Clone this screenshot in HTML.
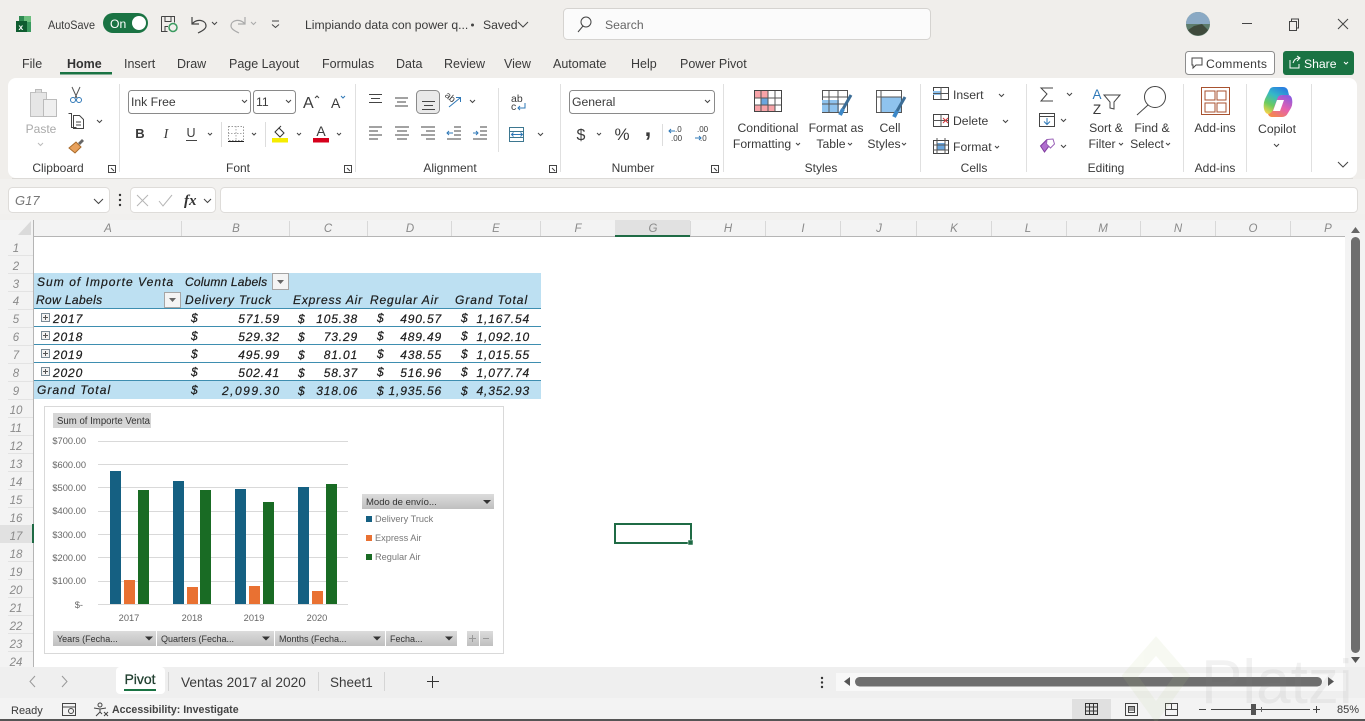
<!DOCTYPE html>
<html lang="en"><head><meta charset="utf-8"><title>Excel</title>
<style>
html,body{margin:0;padding:0;width:1365px;height:721px;overflow:hidden;background:#fff}
svg{display:block}
text{font-family:"Liberation Sans",sans-serif;font-size:12.2px;fill:#3a3a3a}
.t text{font-size:12.5px}
.m{text-anchor:middle}.e{text-anchor:end}
.h text{font-size:12px;letter-spacing:.85px;fill:#1d1d1d;stroke:#1d1d1d;stroke-width:.22;font-style:italic}
.hd text{font-size:11.5px;fill:#8a8a8a;font-style:italic;text-anchor:middle}
.c text{font-size:9.3px;fill:#666}
.f text{font-size:9px;fill:#333}
.i{fill:none;stroke:#444;stroke-width:1}
.ch{fill:none;stroke:#444;stroke-width:1}
</style></head><body>
<svg width="1365" height="721" viewBox="0 0 1365 721" xmlns="http://www.w3.org/2000/svg">
<defs>
<linearGradient id="g" x1="0" y1="0" x2="0" y2="1"><stop offset="0" stop-color="#dcdcdc"/><stop offset="1" stop-color="#bfbfbf"/></linearGradient>
<linearGradient id="cl" x1=".7" y1="0" x2=".2" y2="1"><stop offset="0" stop-color="#2a7fe0"/><stop offset=".35" stop-color="#35b8c8"/><stop offset=".7" stop-color="#6ccb5f"/><stop offset="1" stop-color="#f2d34a"/></linearGradient>
<linearGradient id="cr" x1=".8" y1="0" x2=".2" y2="1"><stop offset="0" stop-color="#8a5be0"/><stop offset=".5" stop-color="#e45fb0"/><stop offset="1" stop-color="#f58a4a"/></linearGradient>
</defs>
<rect width="1365" height="721" fill="#f0eeeb"/>
<!-- title bar -->
<rect x="24" y="16" width="7" height="6" fill="#6cbf7e"/><rect x="24" y="22" width="7" height="10" fill="#3a9a5f"/><rect x="19" y="16" width="5" height="5" fill="#2f8a52"/><rect x="16" y="21" width="11" height="11" fill="#0f5c30"/><text x="18.500" y="30" style="font-size:8.500px;font-weight:bold;fill:#fff">x</text>
<text x="48" y="29" textLength="47" lengthAdjust="spacingAndGlyphs">AutoSave</text>
<rect x="103" y="13" width="45" height="20" rx="10" fill="#1a7343"/><text x="110" y="28" style="fill:#fff;font-size:12.2px">On</text><circle cx="139" cy="23" r="7" fill="#fff"/>
<path class="i" d="M161.500 16.500h13v6M161.500 16.500v15h6M165 16.500v5h6v-5M165 31.500v-5h3"/><circle cx="173" cy="27.500" r="4" fill="none" stroke="#3a9a5f" stroke-width="1.500"/>
<path d="M192 17v7h7M192 24c5-6 14-4 14 2 0 3-4 5-8 7" fill="none" stroke="#444" stroke-width="1.200"/><path class="ch" d="M212 22l2.500 2.500 2.500-2.500"/>
<path d="M245 17v7h-7M245 24c-5-6-14-4-14 2 0 3 4 5 8 7" fill="none" stroke="#aaa" stroke-width="1.200"/><path fill="none" stroke="#aaa" d="M251 22l2.500 2.500 2.500-2.500"/>
<path class="i" d="M272 21h7M272 24.500l3.500 3 3.500-3"/>
<text x="305" y="29">Limpiando data con power q...</text><circle cx="472.500" cy="25" r="1.500" fill="#444"/><text x="483" y="29">Saved</text><path class="i" d="M518 22l5 5 5-5"/>
<rect x="563.500" y="8.500" width="367" height="31" rx="4" fill="#fbfbfb" stroke="#d5d3d0"/>
<circle cx="586" cy="22" r="5" class="i"/><path class="i" d="M583 26l-5 6"/><text x="605" y="29" style="fill:#666">Search</text>
<circle cx="1198" cy="24" r="12" fill="#5d7c6c"/><path d="M1186 24a12 12 0 0 1 24 0z" fill="#8aa9c4"/><path d="M1188 30a12 12 0 0 0 20 0l-6-6-8 2z" fill="#3f4a3c"/>
<path class="i" d="M1242 23.500h10"/><path class="i" d="M1289.500 21.500h7v9h-7zM1291.500 21v-2h7v9h-2"/><path class="i" d="M1338 19l10 10M1348 19l-10 10"/>
<!-- tabs -->
<g class="t"><text x="22" y="68">File</text><text x="67" y="68" style="font-weight:bold;fill:#333">Home</text>
<text x="124" y="68">Insert</text><text x="177" y="68">Draw</text><text x="229" y="68">Page Layout</text><text x="322" y="68">Formulas</text><text x="396" y="68">Data</text><text x="444" y="68">Review</text><text x="504" y="68">View</text><text x="553" y="68">Automate</text><text x="631" y="68">Help</text><text x="680" y="68">Power Pivot</text></g>
<rect x="60" y="72" width="52" height="2.500" fill="#1a7343"/>
<rect x="1185.500" y="51.500" width="89" height="23" rx="3" fill="#fff" stroke="#8d8d8d"/><path class="i" d="M1192 58h10v7h-6l-3 3v-3h-1z"/><text x="1206" y="68" textLength="61">Comments</text>
<rect x="1283" y="51" width="71" height="24" rx="3" fill="#1a7343"/><path fill="none" stroke="#fff" d="M1290 60v8h9v-4M1293 63c1-3 3-5 6-5M1297 56l3 2-3 3"/><text x="1304" y="68" style="fill:#fff">Share</text><path fill="none" stroke="#fff" d="M1344 62l2 2 2-2"/>
<!-- ribbon -->
<rect x="8" y="78" width="1349" height="100" rx="8" fill="#fff"/><path d="M12 178.500h1341" stroke="#dcdad7"/>
<g stroke="#e0e0e0"><path d="M119.500 84v88M355.500 84v88M560.500 84v88M723.500 84v88M920.500 84v88M1026.500 84v88M1183.500 84v88M1246.500 84v88M1311.500 84v88"/></g>
<!-- clipboard -->
<path d="M30.500 92.500h16v24h-16z" fill="#e6e6e6" stroke="#c0c0c0"/><rect x="43.500" y="99.500" width="13" height="17" fill="#efefef" stroke="#bbb"/><path d="M35.500 92.500v-3h6v3" fill="#ddd" stroke="#bbb"/>
<text class="m" x="41" y="133" style="fill:#aaa;font-size:12px">Paste</text><path fill="none" stroke="#bbb" d="M38 143l2.500 2.500 2.500-2.500"/>
<path d="M72 87l5 11M80 87l-5 11" stroke="#555" fill="none"/><circle cx="73" cy="100" r="2.500" fill="none" stroke="#2f78b7"/><circle cx="79" cy="100" r="2.500" fill="none" stroke="#2f78b7"/>
<path class="i" d="M68.500 113.500h3v14h5M73.500 115.500h6l4 4v9h-10z" /><path class="i" d="M76 122h5M76 125h5"/><path class="ch" d="M97 120l2.500 2.500 2.500-2.500"/>
<path d="M69 148l7-6 5 5-6 6z" fill="#e8a15c" stroke="#a86a2a"/><path d="M78 143l4-4 2 2-4 4z" fill="#666"/>
<text class="m" x="58" y="172" style="font-size:12px">Clipboard</text><path class="i" d="M108.500 165.500h7v7h-7zM111 168l3 3"/>
<!-- font -->
<rect x="128.500" y="90.500" width="122" height="23" rx="3" fill="#fff" stroke="#8a8a8a"/><text x="131" y="106">Ink Free</text><path class="ch" d="M242 100l2.500 2.500 2.500-2.500"/>
<rect x="253.500" y="90.500" width="42" height="23" rx="3" fill="#fff" stroke="#8a8a8a"/><text x="256" y="106">11</text><path class="ch" d="M286 100l2.500 2.500 2.500-2.500"/>
<text x="303" y="108" style="font-size:16px">A</text><path class="i" d="M315 98l2-2 2 2"/><text x="331" y="108" style="font-size:14px">A</text><path fill="none" stroke="#2f78b7" d="M341 96l2 2 2-2"/>
<text class="m" x="140" y="138" style="font-weight:bold;font-size:13px">B</text><text class="m" x="166" y="138" style="font-style:italic;font-family:'Liberation Serif',serif;font-size:14px">I</text><text class="m" x="191" y="137" style="font-size:12.500px">U</text><path class="i" d="M186 140.500h11"/><path class="ch" d="M208 133l2 2 2-2"/>
<path d="M221.500 122v25M265.500 122v25" stroke="#ddd"/>
<path d="M228.500 126.500h15v14h-15z" fill="none" stroke="#999" stroke-dasharray="1.500 1.500"/><path d="M228 141.500h16" stroke="#222"/><path d="M236 126v14M228 133.500h15" stroke="#aaa" stroke-dasharray="1.500 1.500"/><path class="ch" d="M252 133l2 2 2-2"/>
<rect x="272" y="138" width="16" height="4.500" fill="#f5ec00"/><path d="M275 132l4-4 5 5-4 4z" fill="none" stroke="#333"/><path d="M279 128l2-2" stroke="#333"/><path class="ch" d="M297 133l2 2 2-2"/>
<text class="m" x="321" y="136" style="font-size:14px">A</text><rect x="313" y="138" width="16" height="4.500" fill="#d6001c"/><path class="ch" d="M337 133l2 2 2-2"/>
<text class="m" x="238" y="172" style="font-size:12px">Font</text><path class="i" d="M344.500 165.500h7v7h-7zM347 168l3 3"/>
<!-- alignment -->
<path class="i" d="M369 94.500h13M371 98.500h9M369 102.500h13M395 98h13M397 102h9M395 106h13"/>
<rect x="416.500" y="90.500" width="23" height="23" rx="4" fill="#e9e9e9" stroke="#8a8a8a"/><path class="i" d="M422 101.500h13M424 105.500h9M422 109.500h13"/>
<path d="M449 107l11-9M456 97.500h4.500v4.500" stroke="#2f78b7" fill="none"/><text x="445" y="100" style="font-size:9.500px" transform="rotate(40 450 97)">ab</text><path class="ch" d="M470 100l2.500 2.500 2.500-2.500"/>
<path class="i" d="M369 127h13M369 131h9M369 135h13M369 139h9M395 127h14M397 131h10M395 135h14M397 139h10M421 127h14M426 131h9M421 135h14M426 139h9"/>
<path class="i" d="M454 127h7M454 131h7M454 135h7M447 139h14"/><path d="M447 133h6M449 131l-2 2 2 2" fill="none" stroke="#2f78b7"/>
<path class="i" d="M480 127h7M480 131h7M480 135h7M473 139h14"/><path d="M473 133h5M476 131l2 2-2 2" fill="none" stroke="#2f78b7"/>
<path d="M498.500 88v64" stroke="#e0e0e0"/>
<text x="511" y="102" style="font-size:10.500px">ab</text><text x="511" y="110" style="font-size:10.500px">c</text><path d="M525 103v5h-7M520 106l-2 2 2 2" fill="none" stroke="#2f78b7"/>
<rect x="509.500" y="127.500" width="14" height="14" fill="none" stroke="#3d7790"/><path d="M510 131.500h14M510 137.500h14" stroke="#3d7790"/><path d="M512 134.500h10M513.500 132.500l-2 2 2 2M520.500 132.500l2 2-2 2" stroke="#2f78b7" fill="none"/><path class="ch" d="M538 133l2.500 2.500 2.500-2.500"/>
<text class="m" x="450" y="172" style="font-size:12px">Alignment</text><path class="i" d="M549.500 165.500h7v7h-7zM552 168l3 3"/>
<!-- number -->
<rect x="569.500" y="90.500" width="145" height="23" rx="3" fill="#fff" stroke="#8a8a8a"/><text x="572" y="106">General</text><path class="ch" d="M705 100l2.500 2.500 2.500-2.500"/>
<text class="m" x="581" y="140" style="font-size:16px">$</text><path class="ch" d="M597 133l2 2 2-2"/><text class="m" x="622" y="140" style="font-size:17px">%</text><text class="m" x="648" y="136" style="font-size:24px;font-weight:bold">,</text>
<path d="M662.500 124v22" stroke="#ddd"/>
<text x="675" y="132" style="font-size:8px">.0</text><text x="671" y="141" style="font-size:8px">.00</text><path d="M669 131h6M671 129l-2 2 2 2" fill="none" stroke="#2f78b7"/>
<text x="697" y="132" style="font-size:8px">.00</text><text x="700" y="141" style="font-size:8px">.0</text><path d="M695 138h6M699 136l2 2-2 2" fill="none" stroke="#2f78b7"/>
<text class="m" x="633" y="172" style="font-size:12px">Number</text><path class="i" d="M711.500 165.500h7v7h-7zM714 168l3 3"/>
<!-- styles -->
<rect x="754.500" y="90.500" width="27" height="21" fill="#fff" stroke="#444"/><rect x="755" y="91" width="13" height="7" fill="#f7a3a8"/><rect x="761" y="98" width="7" height="7" fill="#6aa6de"/><rect x="755" y="105" width="20" height="6" fill="#f7a3a8"/><path d="M761 91v20M768 91v20M775 91v20M755 98h26M755 105h26" stroke="#555" fill="none"/>
<text class="m" x="768" y="132">Conditional</text><text class="m" x="762" y="148">Formatting</text><path class="ch" d="M796 143l2 2 2-2"/>
<rect x="822.500" y="90.500" width="25" height="22" fill="#fff" stroke="#555"/><rect x="822" y="100" width="17" height="12" fill="#8fc3ee"/><path d="M829 91v22M838 91v22M822 97h26M822 104h26" stroke="#555"/><path d="M851 95l-8 14" stroke="#3c6d96" stroke-width="3"/><path d="M843 109l-3 6" stroke="#3c88c8" stroke-width="4"/>
<text class="m" x="836" y="132">Format as</text><text class="m" x="831" y="148">Table</text><path class="ch" d="M848 143l2 2 2-2"/>
<rect x="876.500" y="90.500" width="25" height="22" fill="#fff" stroke="#555"/><rect x="881" y="97" width="20" height="15" fill="#8fc3ee"/><path d="M881 91v22M876 97h26" stroke="#555"/><path d="M905 97l-8 14" stroke="#3c6d96" stroke-width="3"/><path d="M897 111l-3 6" stroke="#3c88c8" stroke-width="4"/>
<text class="m" x="890" y="132">Cell</text><text class="m" x="884" y="148">Styles</text><path class="ch" d="M902 143l2 2 2-2"/>
<text class="m" x="821" y="172" style="font-size:12px">Styles</text>
<!-- cells -->
<rect x="933.500" y="87.500" width="15" height="12" fill="#fff" stroke="#444"/><rect x="933" y="91" width="8" height="4" fill="#8fc3ee"/><path d="M941 87v13M933 93.500h15" stroke="#555"/><text x="953" y="99">Insert</text><path class="ch" d="M999 94l2.500 2.500 2.500-2.500"/>
<rect x="933.500" y="114.500" width="15" height="12" fill="#fff" stroke="#444"/><path d="M941 114v13M933 120.500h15" stroke="#555"/><path d="M943 118l5 5M948 118l-5 5" stroke="#d13438"/><text x="953" y="125">Delete</text><path class="ch" d="M1003 120l2.500 2.500 2.500-2.500"/>
<rect x="933.500" y="140.500" width="15" height="13" fill="#fff" stroke="#444"/><rect x="937" y="143" width="8" height="7" fill="#6aa6de"/><path d="M937 138v16M945 138v16M933 145h15M933 150h15" stroke="#555"/><text x="953" y="151">Format</text><path class="ch" d="M995 146l2 2 2-2"/>
<text class="m" x="974" y="172" style="font-size:12px">Cells</text>
<!-- editing -->
<path class="i" d="M1053 88h-12l6 6-6 7h12" stroke-width="1.100"/><path class="ch" d="M1067 93l2.500 2.500 2.500-2.500"/>
<rect x="1039.500" y="113.500" width="15" height="13" fill="#fff" stroke="#444"/><path d="M1040 116.500h14" stroke="#444"/><path d="M1047 118v6M1044 121.500l3 3 3-3" fill="none" stroke="#2f78b7"/><path class="ch" d="M1061 119l2.500 2.500 2.500-2.500"/>
<path d="M1040.500 146l6-6 4 4-6 8z" fill="#b06fce" stroke="#7e3a9e"/><path d="M1047 139.500l6-0.500 1.500 5-4 4-4-4z" fill="#fff" stroke="#9a62b8"/><path class="ch" d="M1061 145l2.500 2.500 2.500-2.500"/>
<text class="m" x="1097" y="99" style="font-size:13.500px;fill:#2f78b7">A</text><text class="m" x="1097" y="114" style="font-size:13.500px">Z</text><path class="i" d="M1104 95h16l-6 7v7l-4-1v-6z"/>
<text class="m" x="1106" y="132">Sort &amp;</text><text class="m" x="1102" y="148">Filter</text><path class="ch" d="M1119 143l2 2 2-2"/>
<circle cx="1155" cy="97" r="10.500" fill="none" stroke="#444"/><path class="i" d="M1148 105l-11 10"/>
<text class="m" x="1152" y="132">Find &amp;</text><text class="m" x="1147" y="148">Select</text><path class="ch" d="M1166 143l2 2 2-2"/>
<text class="m" x="1106" y="172" style="font-size:12px">Editing</text>
<!-- addins -->
<rect x="1201.500" y="87.500" width="28" height="27" fill="none" stroke="#a8522f"/><rect x="1205" y="91" width="10" height="9" fill="none" stroke="#a8522f"/><rect x="1217" y="91" width="9" height="9" fill="none" stroke="#a8522f"/><rect x="1205" y="103" width="10" height="9" fill="none" stroke="#a8522f"/><rect x="1217" y="103" width="9" height="9" fill="none" stroke="#a8522f"/>
<text class="m" x="1215" y="132">Add-ins</text><text class="m" x="1215" y="172" style="font-size:12px">Add-ins</text>
<!-- copilot -->
<path d="M1274 87h9q4 0 5 4l1 4h-6q-4 0-5 4l-4 11q-2 4-5 4-4 0-5-5-1-5 1-10l4-8q1-4 5-4z" fill="url(#cl)"/>
<path d="M1283 95h5q3 0 4 4 1 5-1 9l-3 5q-2 4-6 4h-10q-3 0-4-3 3 0 5-4l5-13q1-2 5-2z" fill="url(#cr)"/>
<path d="M1277 100h7l-4 11h-7z" fill="#fff"/>
<text class="m" x="1277" y="133">Copilot</text><path class="ch" d="M1274 144l2.500 2.500 2.500-2.500"/>
<path class="ch" d="M1338 162l5 5 5-5"/>
<!-- formula bar -->
<rect x="0" y="179" width="1365" height="35" fill="#f2f1ef"/>
<rect x="8.500" y="187.500" width="101" height="25" rx="4" fill="#fff" stroke="#dedcd9"/><text x="15" y="205" style="font-style:italic;font-size:13px;fill:#777">G17</text><path class="i" d="M94 199l4.500 4.500 4.500-4.500"/>
<circle cx="120" cy="195" r="1.200" fill="#333"/><circle cx="120" cy="200" r="1.200" fill="#333"/><circle cx="120" cy="205" r="1.200" fill="#333"/>
<rect x="130.500" y="187.500" width="85" height="25" rx="4" fill="#fff" stroke="#dedcd9"/><path d="M137 195l11 11M148 195l-11 11M159 201l4 5 9-11" fill="none" stroke="#b5b5b5"/><text x="184" y="205" style="font-family:'Liberation Serif',serif;font-style:italic;font-size:15px;font-weight:bold;fill:#333">fx</text><path class="i" d="M204 199l3.500 3.500 3.500-3.500"/>
<rect x="220.500" y="187.500" width="1137" height="25" rx="4" fill="#fff" stroke="#dedcd9"/>
<!-- grid header -->
<rect x="0" y="214" width="1365" height="6" fill="#f1f0ee"/>
<rect x="0" y="220" width="1345" height="17" fill="#f3f3f3"/><rect x="0" y="237" width="34" height="430" fill="#f3f3f3"/>
<rect x="34" y="237" width="1311" height="430" fill="#fff"/>
<rect x="1345" y="220" width="20" height="447" fill="#f3f3f3"/>
<path d="M34 236.500h1311" stroke="#b5b5b5"/><path d="M33.500 220v447" stroke="#b5b5b5"/>
<path d="M31 221v14h-13z" fill="#dadada"/>
<g stroke="#d8d8d8"><path d="M181.500 221v15M289.500 221v15M367.500 221v15M451.500 221v15M540.500 221v15M690.500 221v15M765.500 221v15M840.500 221v15M916.500 221v15M991.500 221v15M1066.500 221v15M1140.500 221v15M1215.500 221v15M1290.500 221v15"/></g>
<rect x="615" y="220" width="75" height="16" fill="#e1e1e1"/><rect x="615" y="235" width="75" height="2" fill="#1f6b45"/>
<g class="hd"><text x="108" y="232">A</text><text x="236" y="232">B</text><text x="328" y="232">C</text><text x="410" y="232">D</text><text x="496" y="232">E</text><text x="578" y="232">F</text><text x="653" y="232">G</text><text x="728" y="232">H</text><text x="803" y="232">I</text><text x="879" y="232">J</text><text x="954" y="232">K</text><text x="1028" y="232">L</text><text x="1103" y="232">M</text><text x="1178" y="232">N</text><text x="1253" y="232">O</text><text x="1328" y="232">P</text>
<text x="16" y="252">1</text><text x="16" y="270">2</text><text x="16" y="288">3</text><text x="16" y="305">4</text><text x="16" y="323">5</text><text x="16" y="341">6</text><text x="16" y="359">7</text><text x="16" y="377">8</text><text x="16" y="395">9</text><text x="16" y="414">10</text><text x="16" y="432">11</text><text x="16" y="450">12</text><text x="16" y="468">13</text><text x="16" y="486">14</text><text x="16" y="504">15</text><text x="16" y="522">16</text></g>
<rect x="0" y="525" width="33" height="18" fill="#e1e1e1"/><rect x="32" y="524" width="2" height="19" fill="#1f6b45"/>
<g class="hd"><text x="16" y="540">17</text><text x="16" y="558">18</text><text x="16" y="576">19</text><text x="16" y="594">20</text><text x="16" y="612">21</text><text x="16" y="630">22</text><text x="16" y="648">23</text><text x="16" y="666">24</text></g>
<g stroke="#e3e3e3"><path d="M8 255.500h25M8 273.500h25M8 291.500h25M8 309.500h25M8 327.500h25M8 345.500h25M8 363.500h25M8 381.500h25M8 399.500h25M8 417.500h25M8 435.500h25M8 453.500h25M8 471.500h25M8 489.500h25M8 507.500h25M8 561.500h25M8 579.500h25M8 597.500h25M8 615.500h25M8 633.500h25M8 651.500h25"/></g>
<!-- pivot -->
<rect x="34" y="273" width="507" height="36" fill="#bde0f2"/><rect x="34" y="381" width="507" height="18" fill="#bde0f2"/>
<g stroke="#3e8eb0"><path d="M34 308.500h507M34 326.500h507M34 344.500h507M34 362.500h507M34 380.500h507"/></g>
<g class="h">
<text x="37" y="286" textLength="137">Sum of Importe Venta</text><text x="185" y="286" textLength="83">Column Labels</text>
<text x="36" y="304" textLength="67">Row Labels</text><text x="185" y="304" textLength="87">Delivery Truck</text><text x="293" y="304" textLength="70">Express Air</text><text x="370" y="304" textLength="69">Regular Air</text><text x="455" y="304" textLength="73">Grand Total</text>
<text x="53" y="323">2017</text><text x="53" y="341">2018</text><text x="53" y="359">2019</text><text x="53" y="377">2020</text><text x="37" y="394" textLength="74">Grand Total</text>
<text x="191" y="322">$</text><text x="191" y="340">$</text><text x="191" y="358">$</text><text x="191" y="376">$</text><text x="191" y="394">$</text>
<text x="298" y="323">$</text><text x="298" y="341">$</text><text x="298" y="359">$</text><text x="298" y="377">$</text><text x="298" y="395">$</text>
<text x="377" y="322">$</text><text x="377" y="340">$</text><text x="377" y="358">$</text><text x="377" y="376">$</text><text x="377" y="395">$</text>
<text x="461" y="322">$</text><text x="461" y="340">$</text><text x="461" y="358">$</text><text x="461" y="376">$</text><text x="461" y="395">$</text>
<text class="e" x="280" y="323">571.59</text><text class="e" x="280" y="341">529.32</text><text class="e" x="280" y="359">495.99</text><text class="e" x="280" y="377">502.41</text><text class="e" x="280" y="395" textLength="58">2,099.30</text>
<text class="e" x="358" y="323">105.38</text><text class="e" x="358" y="341">73.29</text><text class="e" x="358" y="359">81.01</text><text class="e" x="358" y="377">58.37</text><text class="e" x="358" y="395">318.06</text>
<text class="e" x="442" y="323">490.57</text><text class="e" x="442" y="341">489.49</text><text class="e" x="442" y="359">438.55</text><text class="e" x="442" y="377">516.96</text><text class="e" x="442" y="395">1,935.56</text>
<text class="e" x="530" y="323">1,167.54</text><text class="e" x="530" y="341">1,092.10</text><text class="e" x="530" y="359">1,015.55</text><text class="e" x="530" y="377">1,077.74</text><text class="e" x="530" y="395">4,352.93</text>
</g>
<g fill="#f4f4f4" stroke="#a5a5a5"><rect x="272.500" y="273.500" width="16" height="16"/><rect x="164.500" y="292.500" width="16" height="15"/></g>
<path d="M277 280h7l-3.500 4zM169 298h7l-3.500 4z" fill="#666"/>
<g fill="#f2f2f2" stroke="#7a8a95"><rect x="41.500" y="313.500" width="8" height="8"/><rect x="41.500" y="331.500" width="8" height="8"/><rect x="41.500" y="349.500" width="8" height="8"/><rect x="41.500" y="367.500" width="8" height="8"/></g>
<g stroke="#555"><path d="M43 317.500h5M45.500 315v5M43 335.500h5M45.500 333v5M43 353.500h5M45.500 351v5M43 371.500h5M45.500 369v5"/></g>
<!-- chart -->
<rect x="44.500" y="406.500" width="459" height="247" fill="#fff" stroke="#d9d9d9"/>
<rect x="53" y="413" width="98" height="15" fill="#d6d6d6"/>
<text x="57" y="424" style="font-size:10px;fill:#333" textLength="93" lengthAdjust="spacingAndGlyphs">Sum of Importe Venta</text>
<g stroke="#d9d9d9"><path d="M98 441.500h250M98 464.500h250M98 487.500h250M98 511.500h250M98 534.500h250M98 557.500h250M98 581.500h250M98 604.500h250"/></g>
<g class="c"><text class="e" x="86" y="444">$700.00</text><text class="e" x="86" y="468">$600.00</text><text class="e" x="86" y="491">$500.00</text><text class="e" x="86" y="514">$400.00</text><text class="e" x="86" y="538">$300.00</text><text class="e" x="86" y="561">$200.00</text><text class="e" x="86" y="584">$100.00</text><text class="e" x="83" y="608">$-</text>
<text class="m" x="129" y="621">2017</text><text class="m" x="192" y="621">2018</text><text class="m" x="254" y="621">2019</text><text class="m" x="317" y="621">2020</text></g>
<g fill="#156082"><rect x="110" y="471" width="11" height="133"/><rect x="173" y="481" width="11" height="123"/><rect x="235" y="489" width="11" height="115"/><rect x="298" y="487" width="11" height="117"/></g>
<g fill="#e97132"><rect x="124" y="580" width="11" height="24"/><rect x="187" y="587" width="11" height="17"/><rect x="249" y="586" width="11" height="18"/><rect x="312" y="591" width="11" height="13"/></g>
<g fill="#196b24"><rect x="138" y="490" width="11" height="114"/><rect x="200" y="490" width="11" height="114"/><rect x="263" y="502" width="11" height="102"/><rect x="326" y="484" width="11" height="120"/></g>
<rect x="362" y="494" width="132" height="15" fill="url(#g)"/><text x="366" y="505" style="font-size:9.500px;fill:#333">Modo de envío...</text><path d="M483 500h8l-4 4z" fill="#333"/>
<rect x="366" y="516" width="6" height="6" fill="#156082"/><rect x="366" y="535" width="6" height="6" fill="#e97132"/><rect x="366" y="554" width="6" height="6" fill="#196b24"/>
<g><text x="375" y="522" style="font-size:9.200px;fill:#777">Delivery Truck</text><text x="375" y="541" style="font-size:9.200px;fill:#777">Express Air</text><text x="375" y="560" style="font-size:9.200px;fill:#777">Regular Air</text></g>
<g fill="url(#g)"><rect x="53" y="631" width="103" height="15"/><rect x="157" y="631" width="117" height="15"/><rect x="275" y="631" width="110" height="15"/><rect x="386" y="631" width="71" height="15"/><rect x="467" y="631" width="12" height="15"/><rect x="480" y="631" width="13" height="15"/></g>
<g class="f"><text x="57" y="642">Years (Fecha...</text><text x="161" y="642">Quarters (Fecha...</text><text x="279" y="642">Months (Fecha...</text><text x="390" y="642">Fecha...</text></g>
<path d="M145 636.500h8l-4 4zM262 636.500h8l-4 4zM373 636.500h8l-4 4zM445 636.500h8l-4 4z" fill="#333"/>
<path d="M469 638.500h7M472.500 635v7M483 638.500h6" stroke="#999"/>
<!-- selection -->
<rect x="615" y="524" width="76" height="19" fill="none" stroke="#1f6b45" stroke-width="2"/><rect x="688" y="540" width="5" height="5" fill="#1f6b45" stroke="#fff" stroke-width=".5"/>
<!-- v scrollbar -->
<path d="M1351 233l4.500-6 4.500 6z" fill="#666"/><rect x="1351" y="237" width="9" height="416" rx="4.500" fill="#6e6e6e"/><path d="M1351 657h9l-4.500 6z" fill="#555"/>
<!-- tab bar -->
<rect x="0" y="667" width="1365" height="31" fill="#efefef"/>
<path d="M35 676l-5 5.500 5 5.500" fill="none" stroke="#999"/><path d="M62 676l5 5.500-5 5.500" fill="none" stroke="#999"/>
<rect x="116" y="667" width="49" height="27" rx="4" fill="#fff"/>
<text class="m" x="140" y="684" style="font-size:14px;fill:#1e3d2d;stroke:#1e3d2d;stroke-width:.3">Pivot</text><rect x="124" y="689" width="32" height="2" fill="#1a7343"/>
<text x="181" y="687" style="font-size:13.700px">Ventas 2017 al 2020</text><text x="330" y="687" style="font-size:13.500px">Sheet1</text>
<path d="M168.500 672v19M318.500 672v19M384.500 672v19" stroke="#d5d5d5"/>
<path d="M432.500 676v12M427 681.500h12" stroke="#333"/>
<circle cx="822" cy="678" r="1.200" fill="#333"/><circle cx="822" cy="682.500" r="1.200" fill="#333"/><circle cx="822" cy="687" r="1.200" fill="#333"/>
<rect x="836" y="673" width="510" height="18" fill="#f8f8f8"/>
<path d="M850 677v9l-6-4.500z" fill="#555"/><rect x="855" y="677" width="467" height="9.500" rx="4.700" fill="#6e6e6e"/><path d="M1328 677v9l6-4.500z" fill="#555"/>
<!-- status bar -->
<rect x="0" y="698" width="1365" height="21" fill="#f3f3f3"/><rect x="0" y="719" width="1365" height="2" fill="#555"/>
<text x="11" y="714" style="font-size:11px">Ready</text>
<path class="i" d="M62.500 703.500h13v12h-13zM62 707h14"/><circle cx="71" cy="711" r="2.500" class="i"/>
<circle cx="100" cy="705" r="2" class="i"/><path class="i" d="M94 708l6 1 6-1M100 709v3l-4 4M100 712l2 2"/><path class="i" d="M104 712l4 4M108 712l-4 4"/>
<text x="112" y="713" style="font-size:10.600px;font-weight:bold;fill:#444">Accessibility: Investigate</text>
<rect x="1072" y="699" width="39" height="20" fill="#e0e0e0"/>
<path fill="none" stroke="#333" d="M1085.500 703.500h12v11h-12zM1089.500 703.500v11M1093.500 703.500v11M1085.500 707h12M1085.500 711h12"/>
<path class="i" d="M1125.500 703.500h12v12h-12zM1128.500 706.500h6v6h-6zM1129 708h5M1129 710h5"/>
<path class="i" d="M1165.500 703.500h12v12h-12zM1171.500 703.500v6M1165.500 709.500h12"/>
<path class="i" d="M1199 709.500h7M1211 709.500h99M1313 709.500h7M1316.500 706v7"/>
<rect x="1251" y="704" width="5" height="11" fill="#555"/><path d="M1261.500 707v5" stroke="#666"/>
<text x="1337" y="713" style="font-size:11px">85%</text>
<!-- watermark -->
<g opacity=".1"><path d="M1156 646l26 30-26 36-26-36z" fill="none" stroke="#b8cf8d" stroke-width="13"/><text x="1201" y="703" style="font-size:62px;fill:#888">Platzi</text></g>
</svg>
</body></html>
